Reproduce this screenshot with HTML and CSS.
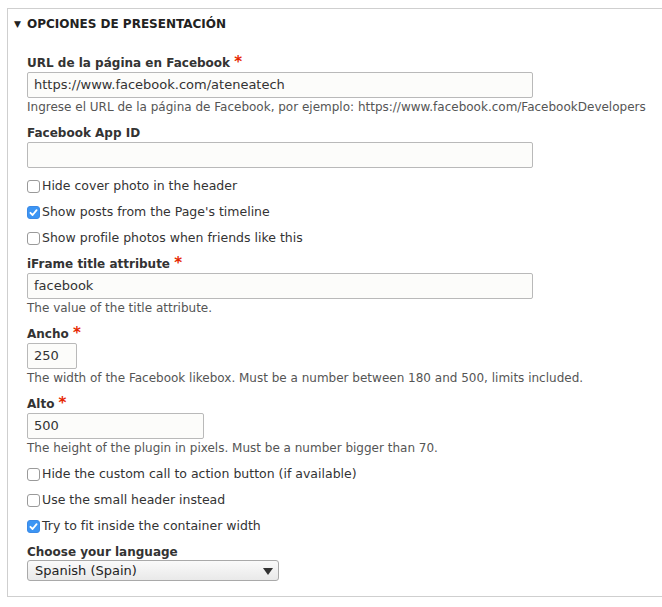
FILE: index.html
```html
<!DOCTYPE html>
<html lang="es">
<head>
<meta charset="utf-8">
<title>Opciones de presentación</title>
<link rel="stylesheet" href="styles.css">
</head>
<body>
<div class="panel">
  <div class="summary"><span class="arrow">&#9660;</span>OPCIONES DE PRESENTACIÓN</div>
  <div class="content">
    <div class="item first">
      <div class="lbl">URL de la página en Facebook <span class="req">*</span></div>
      <div class="field w-long">https://www.facebook.com/ateneatech</div>
      <div class="desc">Ingrese el URL de la página de Facebook, por ejemplo: https://www.facebook.com/FacebookDevelopers</div>
    </div>
    <div class="item">
      <div class="lbl">Facebook App ID</div>
      <div class="field w-long"></div>
    </div>
    <div class="check first-check"><span class="box"></span>Hide cover photo in the header</div>
    <div class="check"><span class="box on"><svg viewBox="0 0 13 13" width="13" height="13"><path d="M3.4 6.8 L5.6 9 L9.6 4.2" fill="none" stroke="#fff" stroke-width="1.8" stroke-linecap="round" stroke-linejoin="round"/></svg></span>Show posts from the Page's timeline</div>
    <div class="check"><span class="box"></span>Show profile photos when friends like this</div>
    <div class="item">
      <div class="lbl">iFrame title attribute <span class="req">*</span></div>
      <div class="field w-long">facebook</div>
      <div class="desc">The value of the title attribute.</div>
    </div>
    <div class="item">
      <div class="lbl">Ancho <span class="req">*</span></div>
      <div class="field w-short">250</div>
      <div class="desc">The width of the Facebook likebox. Must be a number between 180 and 500, limits included.</div>
    </div>
    <div class="item">
      <div class="lbl">Alto <span class="req">*</span></div>
      <div class="field w-mid">500</div>
      <div class="desc">The height of the plugin in pixels. Must be a number bigger than 70.</div>
    </div>
    <div class="check first-check"><span class="box"></span>Hide the custom call to action button (if available)</div>
    <div class="check"><span class="box"></span>Use the small header instead</div>
    <div class="check"><span class="box on"><svg viewBox="0 0 13 13" width="13" height="13"><path d="M3.4 6.8 L5.6 9 L9.6 4.2" fill="none" stroke="#fff" stroke-width="1.8" stroke-linecap="round" stroke-linejoin="round"/></svg></span>Try to fit inside the container width</div>
    <div class="item">
      <div class="lbl">Choose your language</div>
      <div class="select">Spanish (Spain)<span class="caret"></span></div>
    </div>
  </div>
</div>
</body>
</html>
```

FILE: styles.css
```css
html, body {
  margin: 0;
  padding: 0;
  background: #fff;
  overflow: hidden;
}
body {
  font-family: "DejaVu Sans", Verdana, sans-serif;
  color: #333;
  font-size: 12px;
}
.panel {
  margin: 8px -40px 0 7px;
  border: 1px solid #cfcfcf;
  padding-bottom: 15px;
}
.summary {
  padding: 6px 0 0 6px;
  line-height: 18px;
  font-size: 12px;
  font-weight: bold;
  color: #222;
  display: flex;
  align-items: center;
}
.arrow {
  font-size: 9px;
  width: 13px;
  display: inline-block;
}
.content {
  padding-left: 19px;
}
.item {
  margin-top: 10px;
}
.check + .item {
  margin-top: 9px;
}
.item.first {
  margin-top: 22px;
}
.lbl {
  font-weight: bold;
  font-size: 12px;
  line-height: 17px;
  color: #333;
}
.req {
  color: #e62600;
  font-size: 15px;
  line-height: 10px;
}
.field {
  box-sizing: border-box;
  height: 26px;
  border: 1px solid #b9b9b9;
  border-radius: 2px;
  background: #fcfcfa;
  padding: 0 6px;
  font-size: 13px;
  line-height: 24px;
  color: #333;
}
.w-long { width: 506px; }
.w-short { width: 50px; }
.w-mid { width: 177px; }
.desc {
  font-size: 12px;
  line-height: 16px;
  color: #555;
  margin-top: 1px;
  white-space: nowrap;
}
.check {
  display: flex;
  align-items: center;
  font-size: 12.5px;
  line-height: 18px;
  margin-top: 8px;
  color: #333;
}
.check.first-check {
  margin-top: 9px;
}
.box {
  box-sizing: border-box;
  width: 13px;
  height: 13px;
  border: 1px solid #9a9a9a;
  border-radius: 3px;
  background: #fff;
  margin-right: 2px;
  display: inline-flex;
}
.box.on {
  background: #3c95f4;
  border-color: #3c8ae6;
}
.box svg {
  margin: -1px;
}
.select {
  position: relative;
  box-sizing: border-box;
  width: 252px;
  height: 21px;
  margin-top: -1px;
  border: 1px solid #a9a9a9;
  border-radius: 3px;
  background: linear-gradient(#fafafa, #e9e9e9);
  padding-left: 7px;
  font-size: 13px;
  line-height: 19px;
  color: #222;
}
.caret {
  position: absolute;
  right: 5px;
  top: 7px;
  width: 0;
  height: 0;
  border-left: 5px solid transparent;
  border-right: 5px solid transparent;
  border-top: 7px solid #333;
}
```
